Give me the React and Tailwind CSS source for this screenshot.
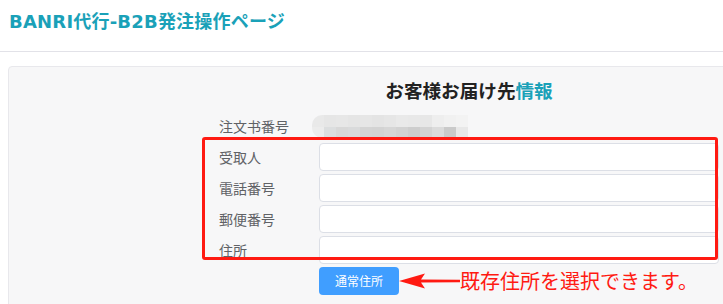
const top = ['#e9e9e9', '#e6e6e6', '#e7e7e7', '#e5e5e5', '#e6e6e6', '#e4e4e4', '#e6e6e6', '#e9e9e9', '#e8e8e8', '#e7e7e7', '#eeeeee', '#f1f1f1', '#f3f3f3']
const bottom = ['#dcdedf', '#d8d8d8', '#d9dadb', '#d4d4d4', '#d3d3d3', '#d6d6d6', '#d2d2d2', '#cdcdcd', '#d3d3d3', '#dbdbdb', '#cacaca', '#e8e8e8']

function BlurredValue() {
  return (
    <div className="flex h-[23px] w-[156px] flex-col overflow-hidden rounded-l-[10px] blur-[0.4px]">
      <div className="flex h-[12px]">
        {top.map((c, i) => (
          <div key={i} className="h-full w-[12px]" style={{ background: c }} />
        ))}
      </div>
      <div className="flex h-[11px]">
        <div className="h-full w-[12px] bg-[#ececec]" />
        {bottom.map((c, i) => (
          <div key={i} className="h-full w-[12px]" style={{ background: c }} />
        ))}
      </div>
    </div>
  )
}

function Row({ label }) {
  return (
    <div className="flex h-[28px] items-center">
      <label className="w-[114px] pl-[14px] text-[14px] text-[#606266]">{label}</label>
      <input
        className="h-[28px] w-[400px] rounded-[4px] border border-[#dcdfe6] bg-white outline-none"
        type="text"
      />
    </div>
  )
}

export default function App() {
  return (
    <div
      className="h-[304px] w-[723px] overflow-hidden bg-white"
      style={{ fontFamily: '"Noto Sans CJK JP", "Noto Sans", sans-serif' }}
    >
      <header className="h-[52px] border-b border-[#e2e2e8] pl-[9px] pt-[10px]">
        <h1
          className="text-[18px] font-bold leading-[24px] tracking-[0.2px] text-[#1aa1b8]"
          style={{ fontFamily: '"DejaVu Sans", "Noto Sans CJK JP", sans-serif' }}
        >
          BANRI代行-B2B発注操作ページ
        </h1>
      </header>

      <section className="ml-[8px] mr-[-20px] mt-[14px] flex h-[260px] rounded-[4px] border border-[#e8e8ec] bg-[#f7f7f8] pt-[11px]">
        <div className="w-[196px] shrink-0" />
        <div className="flex w-[514px] flex-col">
          <h2 className="mb-[10px] pl-[14px] text-center text-[18.6px] font-bold leading-[24px] text-[#222]">
            お客様お届け先<span className="text-[#1aa1b8]">情報</span>
          </h2>

          <div className="flex h-[28px] items-center">
            <span className="w-[107px] pl-[14px] text-[14px] text-[#606266]">注文书番号</span>
            <BlurredValue />
          </div>

          <div className="relative mt-[3px] flex flex-col gap-[3px]">
            <Row label="受取人" />
            <Row label="電話番号" />
            <Row label="郵便番号" />
            <Row label="住所" />
            <div className="pointer-events-none absolute left-[-3px] top-[-6px] h-[123px] w-[516px] rounded-[3px] border-[3px] border-[#ff1a12]" />
          </div>

          <div className="mt-[3px] flex h-[28px] items-center pl-[114px]">
            <button
              className="h-[28px] w-[80px] rounded-[4px] bg-[#409eff] text-[12px] text-white"
              type="button"
            >
              通常住所
            </button>
            <svg width="61" height="18" viewBox="0 0 61 18" className="shrink-0">
              <polygon points="0,9 26,1.5 22,7.6 61,7.8 61,10.2 22,10.4 26,16.5" fill="#ff1a12" />
            </svg>
            <span className="whitespace-nowrap text-[20px] leading-none text-[#ff1a12]">
              既存住所を選択できます。
            </span>
          </div>
        </div>
      </section>
    </div>
  )
}
